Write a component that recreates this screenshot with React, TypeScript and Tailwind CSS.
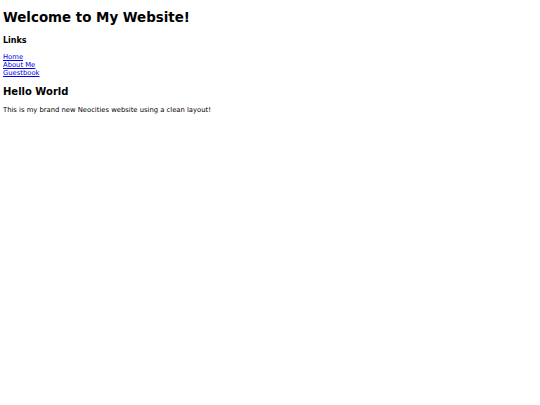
export default function App() {
  return (
    <div className="min-h-[405px] bg-white px-[3px] text-[6.8px] leading-[8px] text-black" style={{ fontFamily: '"DejaVu Sans", Verdana, sans-serif' }}>
      <h1 className="pt-[10px] text-[13.4px] font-bold leading-[16px]">Welcome to My Website!</h1>
      <h3 className="mt-[10px] text-[8px] font-bold leading-[10px]">Links</h3>
      <ul className="mt-[7px]">
        <li><a href="#" className="text-[#0000ee] underline">Home</a></li>
        <li><a href="#" className="text-[#0000ee] underline">About Me</a></li>
        <li><a href="#" className="text-[#0000ee] underline">Guestbook</a></li>
      </ul>
      <h2 className="mt-[9px] text-[10px] font-bold leading-[12px]">Hello World</h2>
      <p className="mt-[8px]">This is my brand new Neocities website using a clean layout!</p>
    </div>
  );
}
